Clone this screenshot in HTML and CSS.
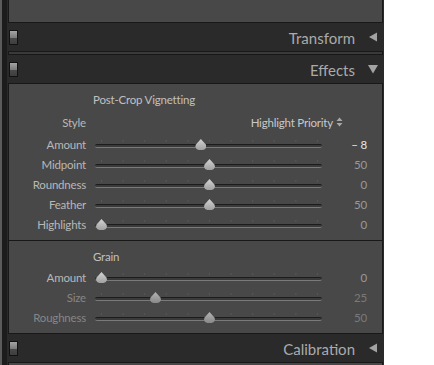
FILE: index.html
```html
<!DOCTYPE html>
<html lang="en">
<head>
    <meta charset="UTF-8">
    <title>Develop - Effects</title>
    <link rel="stylesheet" href="styles.css">
</head>
<body>
    <div class="panel">
        <div class="rail"></div>
        <div class="column">
            <div class="box box-top"></div>

            <div class="panel-header">
                <span class="switch"></span>
                <span class="panel-title">Transform</span>
                <svg class="arrow" width="10" height="10" viewBox="0 0 10 10"><path d="M1 5 L9 0.5 L9 9.5 Z" fill="#a3a3a3"/></svg>
            </div>
            <div class="box box-collapsed"></div>

            <div class="panel-header">
                <span class="switch"></span>
                <span class="panel-title">Effects</span>
                <svg class="arrow" width="10" height="10" viewBox="0 0 10 10"><path d="M0 1 L10 1 L5 9.5 Z" fill="#a3a3a3"/></svg>
            </div>
            <div class="box box-effects">
                <section class="group">
                    <div class="group-title">Post-Crop Vignetting</div>
                    <div class="row row-style">
                        <span class="label">Style</span>
                        <span class="select">Highlight Priority
                            <svg width="7" height="10" viewBox="0 0 7 10"><path d="M3.5 0.5 L6.5 4 L0.5 4 Z M3.5 9.5 L6.5 6 L0.5 6 Z" fill="#a8a8a8"/></svg>
                        </span>
                    </div>
                    <div class="row">
                        <span class="label">Amount</span>
                        <div class="slider"><div class="ticks"></div><div class="track"></div><div class="range"><span class="thumb" style="left: 46%"></span></div></div>
                        <span class="value active">– 8</span>
                    </div>
                    <div class="row">
                        <span class="label">Midpoint</span>
                        <div class="slider"><div class="ticks"></div><div class="track"></div><div class="range"><span class="thumb" style="left: 50%"></span></div></div>
                        <span class="value">50</span>
                    </div>
                    <div class="row">
                        <span class="label">Roundness</span>
                        <div class="slider"><div class="ticks"></div><div class="track"></div><div class="range"><span class="thumb" style="left: 50%"></span></div></div>
                        <span class="value">0</span>
                    </div>
                    <div class="row">
                        <span class="label">Feather</span>
                        <div class="slider"><div class="ticks"></div><div class="track"></div><div class="range"><span class="thumb" style="left: 50%"></span></div></div>
                        <span class="value">50</span>
                    </div>
                    <div class="row">
                        <span class="label">Highlights</span>
                        <div class="slider"><div class="ticks"></div><div class="track"></div><div class="range"><span class="thumb" style="left: 0%"></span></div></div>
                        <span class="value">0</span>
                    </div>
                </section>

                <section class="group group-grain">
                    <div class="group-title">Grain</div>
                    <div class="row">
                        <span class="label">Amount</span>
                        <div class="slider"><div class="ticks"></div><div class="track"></div><div class="range"><span class="thumb" style="left: 0%"></span></div></div>
                        <span class="value">0</span>
                    </div>
                    <div class="row disabled">
                        <span class="label">Size</span>
                        <div class="slider"><div class="ticks"></div><div class="track"></div><div class="range"><span class="thumb" style="left: 25%"></span></div></div>
                        <span class="value">25</span>
                    </div>
                    <div class="row disabled">
                        <span class="label">Roughness</span>
                        <div class="slider"><div class="ticks"></div><div class="track"></div><div class="range"><span class="thumb" style="left: 50%"></span></div></div>
                        <span class="value">50</span>
                    </div>
                </section>
            </div>

            <div class="panel-header">
                <span class="switch"></span>
                <span class="panel-title">Calibration</span>
                <svg class="arrow" width="10" height="10" viewBox="0 0 10 10"><path d="M1 5 L9 0.5 L9 9.5 Z" fill="#a3a3a3"/></svg>
            </div>
            <div class="box box-bottom"></div>
        </div>
    </div>
</body>
</html>
```

FILE: styles.css
```css
/* Page */
body {
    margin: 0;
    background-color: #fff;
    font-family: Lato, "Open Sans", sans-serif;
    color: #b8b8b8;
}

.panel {
    display: flex;
    width: 384px;
    height: 365px;
    overflow: hidden;
}

.rail {
    width: 5px;
    border-left: 2px solid #5b5b5b;
    background-color: #1c1c1c;
}

.column {
    flex: 1;
    padding: 0 1px;
    background-color: #2a2a2a;
}

/* Content boxes */
.box {
    background-color: #484848;
    border: 1px solid #181818;
}
.box-top {
    height: 22px;
    border-top: 0;
}
.box-collapsed {
    height: 2px;
    background-color: #3a3a3a;
}
.box-bottom {
    height: 20px;
    border-bottom: 0;
}

/* Panel headers */
.panel-header {
    display: flex;
    align-items: center;
    height: 28px;
    padding: 0 5px 0 1px;
}
.switch {
    width: 7px;
    height: 13px;
    border: 1px solid #121212;
    background: linear-gradient(to bottom, #a4a4a4 0%, #7c7c7c 50%, #4a4a4a 52%, #3e3e3e 100%);
}
.panel-title {
    margin-left: auto;
    margin-top: 1px;
    font-size: 15px;
    color: #aaaaaa;
}
.arrow {
    margin-left: 13px;
}

/* Groups */
.group {
    padding: 6px 0;
}
.group-grain {
    border-top: 1px solid #181818;
}
.group-title {
    height: 20px;
    line-height: 20px;
    padding-left: 84px;
    font-size: 11.5px;
    letter-spacing: -0.2px;
    color: #c0c0c0;
}

.row {
    display: grid;
    grid-template-columns: 77px 227px 36px;
    column-gap: 9px;
    align-items: center;
    height: 20px;
    font-size: 11.5px;
    letter-spacing: -0.2px;
}
.row-style {
    height: 24px;
}
.label {
    text-align: right;
}
.select {
    grid-column: 2 / 4;
    justify-self: end;
    display: flex;
    align-items: center;
    gap: 3px;
    padding-right: 24px;
    color: #c8c8c8;
}
.value {
    text-align: right;
    color: #999;
}
.value.active {
    color: #e6e6e6;
}
.row.disabled .label {
    color: #868686;
}
.row.disabled .value {
    color: #7a7a7a;
}

/* Sliders */
.slider {
    position: relative;
    height: 20px;
}
.track {
    position: absolute;
    left: 0;
    right: 0;
    top: 10px;
    height: 2px;
    border-radius: 2px;
    border-top: 1px solid #1c1c1c;
    border-bottom: 1px solid #7a7a7a;
    background-color: #3a3a3a;
}
.ticks {
    position: absolute;
    left: 6px;
    width: 217px;
    top: 6px;
    height: 2px;
    background: linear-gradient(to right, #575757 1px, transparent 1px);
    background-size: 21.6px 100%;
}
.range {
    position: absolute;
    left: 6px;
    width: 216px;
    top: 5px;
    height: 11px;
}
.thumb {
    position: absolute;
    top: 0;
    width: 11px;
    height: 11px;
    margin-left: -5px;
    background: linear-gradient(to bottom, #d4d4d4, #a0a0a0);
    clip-path: polygon(50% 0, 95% 50%, 100% 70%, 90% 92%, 70% 100%, 30% 100%, 10% 92%, 0 70%, 5% 50%);
}
.row.disabled .thumb {
    background: linear-gradient(to bottom, #b4b4b4, #888);
}
```
